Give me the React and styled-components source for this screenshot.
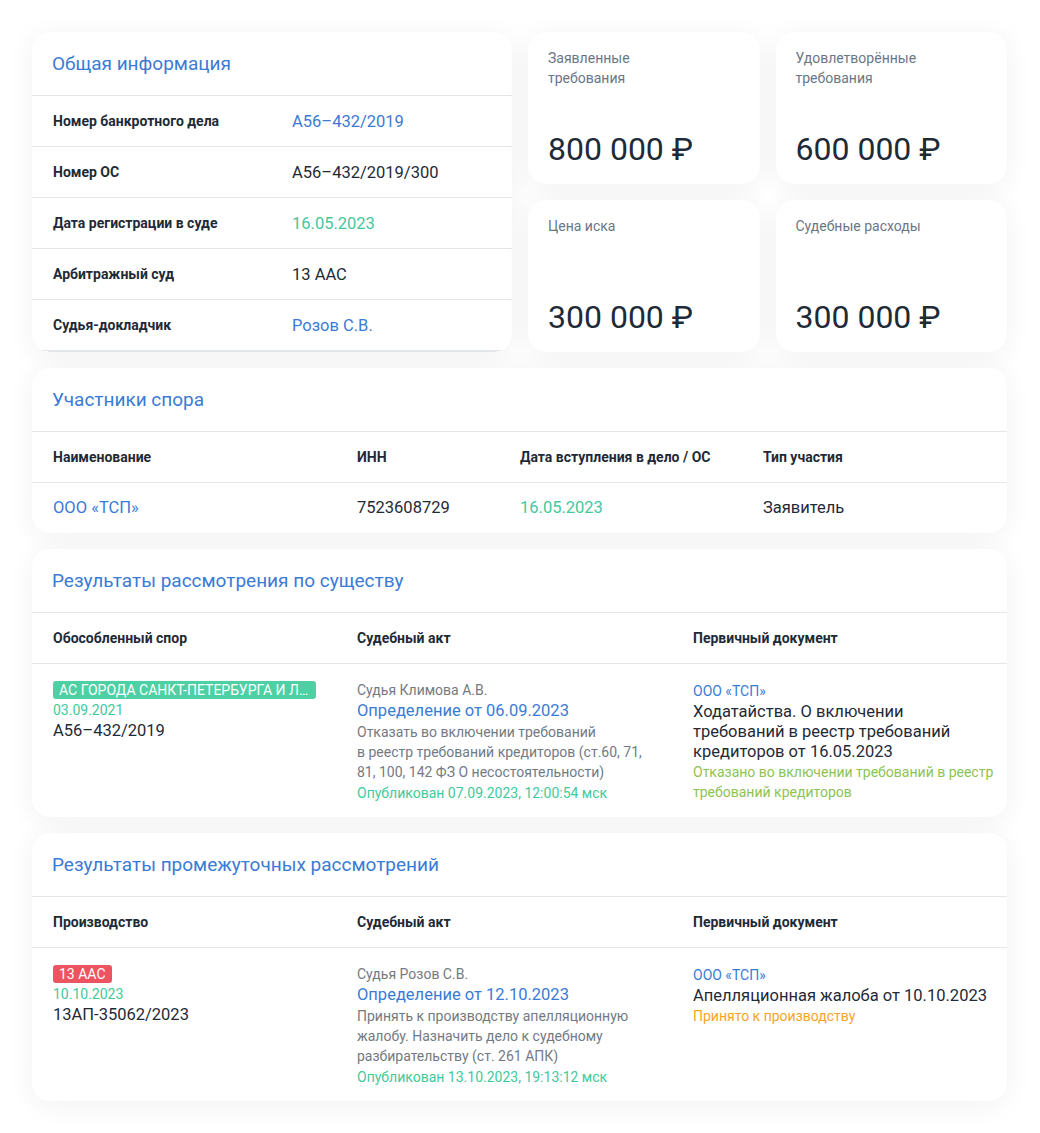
import React from "react";
import styled, { createGlobalStyle } from "styled-components";

const GlobalStyle = createGlobalStyle`
  * { box-sizing: border-box; }
  body {
    margin: 0;
    background: #ffffff;
    font-family: Roboto, "Liberation Sans", sans-serif;
    color: #1f2a37;
  }
`;

const Page = styled.div`
  padding: 32px 33px 32px 32px;
  display: flex;
  flex-direction: column;
  gap: 16px;
`;

const TopGrid = styled.div`
  display: grid;
  grid-template-columns: 480px 1fr;
  gap: 16px;
`;

const StatGrid = styled.div`
  display: grid;
  grid-template-columns: 1fr 1fr;
  grid-auto-rows: 152px;
  gap: 16px;
`;

const Card = styled.section`
  background: #fff;
  border-radius: 18px;
  box-shadow: 0 4px 28px rgba(30, 40, 70, 0.06);
  overflow: hidden;
`;

const CardTitle = styled.h2`
  margin: 0;
  height: 64px;
  padding: 0 20px 1px;
  display: flex;
  align-items: center;
  font-size: 19px;
  font-weight: 400;
  color: #3a7bd5;
  border-bottom: 1px solid #e3e6ea;
`;

const InfoRow = styled.div`
  display: grid;
  grid-template-columns: 239px 1fr;
  align-items: center;
  height: 51px;
  padding: 0 20px 0 21px;
  border-bottom: 1px solid #e3e6ea;
  &:last-of-type {
    height: 50px;
    border-bottom: none;
  }
`;

const BottomRule = styled.div`
  height: 1px;
  margin: 0 15px 0 16px;
  background: #e3e6ea;
`;

const Label = styled.div`
  font-size: 14px;
  font-weight: 700;
  color: #1f2a37;
`;

const Value = styled.div`
  font-size: 16.5px;
  color: ${(p) => p.$color || "#1f2a37"};
`;

const StatCard = styled(Card)`
  display: flex;
  flex-direction: column;
  justify-content: space-between;
  padding: 16px 20px 15px;
`;

const StatLabel = styled.div`
  max-width: 140px;
  font-size: 14px;
  line-height: 20px;
  color: #6b7685;
`;

const StatValue = styled.div`
  font-size: 32px;
  line-height: 40px;
  color: #1f2a37;
`;

const TableRow = styled.div`
  display: grid;
  grid-template-columns: ${(p) => p.$cols};
  align-items: ${(p) => (p.$top ? "start" : "center")};
  min-height: ${(p) => (p.$head ? "51px" : "50px")};
  border-bottom: ${(p) => (p.$head ? "1px solid #e3e6ea" : "none")};
  padding: ${(p) => (p.$top ? "16px 0 13px" : "0")};
`;

const Cell = styled.div`
  padding: 0 ${(p) => p.$right || "20px"} 0 21px;
  display: flex;
  flex-direction: column;
  align-items: flex-start;
  min-width: 0;
`;

const HeadCell = styled(Cell)`
  font-size: 14px;
  font-weight: 700;
  color: #1f2a37;
`;

const Badge = styled.span`
  display: block;
  max-width: 100%;
  margin-top: 1px;
  height: 18px;
  line-height: 18px;
  padding: 0 6px;
  border-radius: 3px;
  background: ${(p) => p.$bg};
  color: #fff;
  font-size: 14px;
  font-weight: 400;
  text-transform: uppercase;
  white-space: nowrap;
  overflow: hidden;
  text-overflow: ellipsis;
`;

const Small = styled.div`
  font-size: 14px;
  line-height: ${(p) => p.$lh || "20px"};
  color: ${(p) => p.$color || "#737a84"};
  white-space: pre-line;
`;

const Main = styled.div`
  font-size: 16.5px;
  line-height: ${(p) => p.$lh || "20px"};
  color: ${(p) => p.$color || "#1f2a37"};
  white-space: pre-line;
`;

const BLUE = "#3a7bd5";
const GREEN = "#42c99b";

const info = [
  ["Номер банкротного дела", "А56–432/2019", BLUE],
  ["Номер ОС", "А56–432/2019/300"],
  ["Дата регистрации в суде", "16.05.2023", GREEN],
  ["Арбитражный суд", "13 ААС"],
  ["Судья-докладчик", "Розов С.В.", BLUE],
];

const stats = [
  ["Заявленные требования", "800 000 ₽"],
  ["Удовлетворённые требования", "600 000 ₽"],
  ["Цена иска", "300 000 ₽"],
  ["Судебные расходы", "300 000 ₽"],
];

const PART_COLS = "304px 163px 243px 1fr";
const RES_COLS = "304px 336px 1fr";

const ResultCard = ({ title, firstHead, badge, badgeBg, date, number, judge, act, desc, published, org, doc, status, statusColor }) => (
  <Card>
    <CardTitle>{title}</CardTitle>
    <TableRow $head $cols={RES_COLS}>
      <HeadCell>{firstHead}</HeadCell>
      <HeadCell>Судебный акт</HeadCell>
      <HeadCell>Первичный документ</HeadCell>
    </TableRow>
    <TableRow $top $cols={RES_COLS}>
      <Cell>
        <Badge $bg={badgeBg}>{badge}</Badge>
        <Small $color={GREEN} $lh="22px">{date}</Small>
        <Main>{number}</Main>
      </Cell>
      <Cell>
        <Small>{judge}</Small>
        <Main $color={BLUE} $lh="22px">{act}</Main>
        <Small>{desc}</Small>
        <Small $color={GREEN} $lh="22px">{published}</Small>
      </Cell>
      <Cell $right="6px">
        <Small $color={BLUE} $lh="22px">{org}</Small>
        <Main>{doc}</Main>
        <Small $color={statusColor}>{status}</Small>
      </Cell>
    </TableRow>
  </Card>
);

export default function App() {
  return (
    <>
      <GlobalStyle />
      <Page>
        <TopGrid>
          <Card>
            <CardTitle>Общая информация</CardTitle>
            {info.map(([l, v, c]) => (
              <InfoRow key={l}>
                <Label>{l}</Label>
                <Value $color={c}>{v}</Value>
              </InfoRow>
            ))}
            <BottomRule />
          </Card>
          <StatGrid>
            {stats.map(([l, v]) => (
              <StatCard key={l}>
                <StatLabel>{l}</StatLabel>
                <StatValue>{v}</StatValue>
              </StatCard>
            ))}
          </StatGrid>
        </TopGrid>

        <Card>
          <CardTitle>Участники спора</CardTitle>
          <TableRow $head $cols={PART_COLS}>
            <HeadCell>Наименование</HeadCell>
            <HeadCell>ИНН</HeadCell>
            <HeadCell>Дата вступления в дело / ОС</HeadCell>
            <HeadCell>Тип участия</HeadCell>
          </TableRow>
          <TableRow $cols={PART_COLS}>
            <Cell><Main $color={BLUE}>ООО «ТСП»</Main></Cell>
            <Cell><Main>7523608729</Main></Cell>
            <Cell><Main $color={GREEN}>16.05.2023</Main></Cell>
            <Cell><Main>Заявитель</Main></Cell>
          </TableRow>
        </Card>

        <ResultCard
          title="Результаты рассмотрения по существу"
          firstHead="Обособленный спор"
          badge="АС города Санкт-Петербурга и Ленинградской области"
          badgeBg="#4dd0a4"
          date="03.09.2021"
          number="А56–432/2019"
          judge="Судья Климова А.В."
          act="Определение от 06.09.2023"
          desc={"Отказать во включении требований\nв реестр требований кредиторов (ст.60, 71, 81, 100, 142 ФЗ О несостоятельности)"}
          published="Опубликован 07.09.2023, 12:00:54 мск"
          org="ООО «ТСП»"
          doc={"Ходатайства. О включении\nтребований в реестр требований\nкредиторов от 16.05.2023"}
          status="Отказано во включении требований в реестр требований кредиторов"
          statusColor="#8cc454"
        />

        <ResultCard
          title="Результаты промежуточных рассмотрений"
          firstHead="Производство"
          badge="13 ААС"
          badgeBg="#ec5462"
          date="10.10.2023"
          number="13АП-35062/2023"
          judge="Судья Розов С.В."
          act="Определение от 12.10.2023"
          desc="Принять к производству апелляционную жалобу. Назначить дело к судебному разбирательству (ст. 261 АПК)"
          published="Опубликован 13.10.2023, 19:13:12 мск"
          org="ООО «ТСП»"
          doc="Апелляционная жалоба от 10.10.2023"
          status="Принято к производству"
          statusColor="#f5a524"
        />
      </Page>
    </>
  );
}
